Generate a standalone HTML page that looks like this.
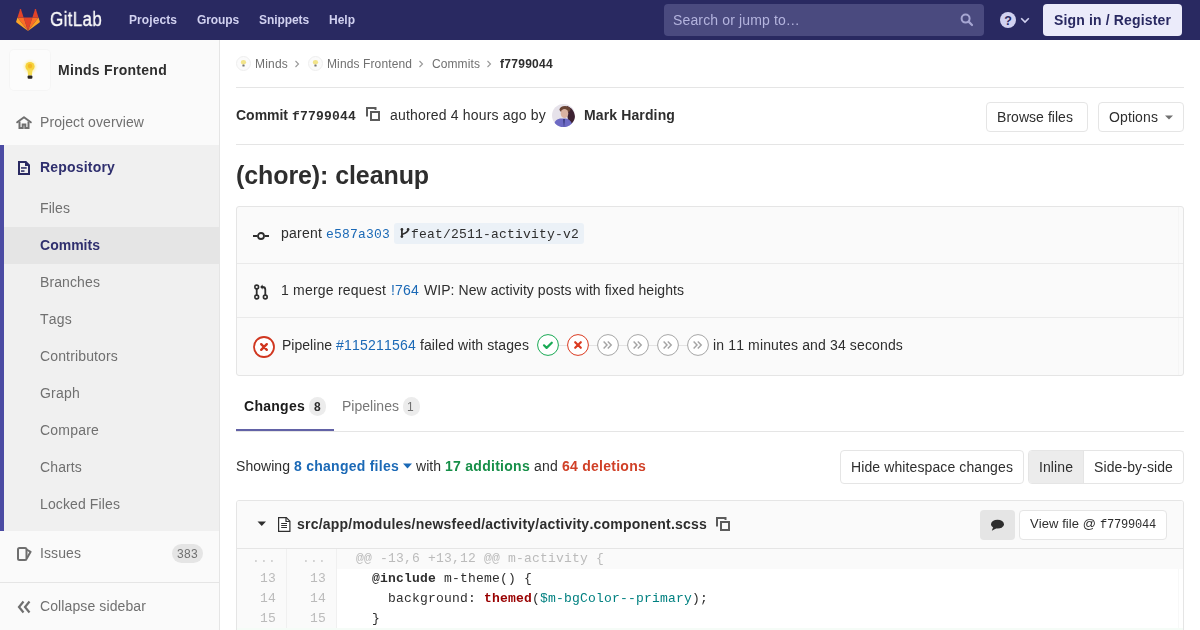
<!DOCTYPE html>
<html><head><meta charset="utf-8">
<style>
*{box-sizing:border-box;margin:0;padding:0}
html,body{width:1200px;height:630px;overflow:hidden;background:#fff;font-family:"Liberation Sans",sans-serif;color:#2e2e2e;font-size:14px}
.a{position:absolute;white-space:pre;line-height:1;font-kerning:none;will-change:transform}
.box{position:absolute}
svg{position:absolute;overflow:visible}
</style></head>
<body>
<div class="box" style="left:0px;top:0px;width:1200px;height:40px;background:#292961;"></div>
<svg style="left:16px;top:8px" width="24" height="23" viewBox="0 0 36 34.6"><path fill="#e24329" d="M18 34.5l6.6-20.3H11.4z"/><path fill="#fc6d26" d="M18 34.5L11.4 14.2H2.2z"/><path fill="#fca326" d="M2.2 14.2L.2 20.4c-.2.6 0 1.2.5 1.5L18 34.5z"/><path fill="#e24329" d="M2.2 14.2h9.2L7.4 2c-.2-.6-1.1-.6-1.3 0z"/><path fill="#fc6d26" d="M18 34.5l6.6-20.3h9.2z"/><path fill="#fca326" d="M33.8 14.2l2 6.2c.2.6 0 1.2-.5 1.5L18 34.5z"/><path fill="#e24329" d="M33.8 14.2h-9.2L28.6 2c.2-.6 1.1-.6 1.3 0z"/></svg>
<div class="a" style="left:50px;top:9px;font-size:20px;color:#fafafa;letter-spacing:0.400px;transform:scaleX(0.85);transform-origin:0 0;-webkit-text-stroke:0.35px #fafafa">GitLab</div>
<div class="a" style="left:129px;top:14px;font-size:12px;color:#d1d1f0;letter-spacing:0.081px;font-weight:bold">Projects</div>
<div class="a" style="left:197px;top:14px;font-size:12px;color:#d1d1f0;letter-spacing:-0.111px;font-weight:bold">Groups</div>
<div class="a" style="left:259px;top:14px;font-size:12px;color:#d1d1f0;letter-spacing:-0.084px;font-weight:bold">Snippets</div>
<div class="a" style="left:329px;top:14px;font-size:12px;color:#d1d1f0;letter-spacing:-0.001px;font-weight:bold">Help</div>
<div class="box" style="left:664px;top:4px;width:320px;height:32px;background:#4a4a7f;border-radius:4px"></div>
<div class="a" style="left:673px;top:13px;font-size:14px;color:#b4b4de;letter-spacing:0.139px">Search or jump to…</div>
<svg style="left:960px;top:13px" width="14" height="14" viewBox="0 0 14 14"><circle cx="5.6" cy="5.6" r="4" fill="none" stroke="#a6a6d2" stroke-width="2"/><path d="M8.6 8.6l3.4 3.4" stroke="#a6a6d2" stroke-width="2.2" stroke-linecap="round"/></svg>
<svg style="left:1000px;top:12px" width="16" height="16" viewBox="0 0 16 16"><circle cx="8" cy="8" r="8" fill="#d1d1f0"/><text x="8" y="12.6" font-family="Liberation Sans" font-weight="bold" font-size="12.5" text-anchor="middle" fill="#292961">?</text></svg>
<svg style="left:1020px;top:17px" width="10" height="7" viewBox="0 0 10 7"><path d="M1.2 1.2l3.8 3.8 3.8-3.8" fill="none" stroke="#d1d1f0" stroke-width="1.6"/></svg>
<div class="box" style="left:1043px;top:4px;width:139px;height:32px;background:#ebebfa;border-radius:4px"></div>
<div class="a" style="left:1054px;top:13px;font-size:14px;color:#292961;letter-spacing:0.147px;font-weight:bold">Sign in / Register</div>
<div class="box" style="left:0px;top:40px;width:220px;height:590px;background:#fafafa;border-right:1px solid #e5e5e5"></div>
<div class="box" style="left:10px;top:50px;width:40px;height:40px;background:#fcfcfc;border-radius:4px;box-shadow:0 0 0 1px rgba(0,0,0,0.02)"></div>
<svg style="left:22px;top:61px" width="16" height="19" viewBox="0 0 16 19"><defs><filter id="gl"><feGaussianBlur stdDeviation="0.9"/></filter><filter id="gl2"><feGaussianBlur stdDeviation="0.5"/></filter></defs><circle cx="8" cy="5.8" r="6.2" fill="#fbf0a8" opacity="0.7" filter="url(#gl)"/><g filter="url(#gl2)"><circle cx="8" cy="5.6" r="4.6" fill="#f7d23a"/><path d="M5.3 8.5 Q6 11 6 14.5 H10 Q10 11 10.7 8.5z" fill="#f5dc52"/><circle cx="8" cy="5" r="2.2" fill="#f2b01e" opacity="0.8"/><rect x="5.6" y="14.6" width="4.8" height="3.2" rx="1" fill="#2a2522"/></g></svg>
<div class="a" style="left:58px;top:63px;font-size:14px;color:#2e2e2e;letter-spacing:0.287px;font-weight:bold">Minds Frontend</div>
<svg style="left:16px;top:116px" width="16" height="13" viewBox="0 0 16 13"><path d="M1.2 6.3L8 1.2l6.8 5.1" fill="none" stroke="#6f6f6f" stroke-width="2" stroke-linejoin="round" stroke-linecap="round"/><path d="M3.5 5.5V12h3.2V8.5h2.6V12h3.2V5.5" fill="none" stroke="#6f6f6f" stroke-width="2"/></svg>
<div class="a" style="left:40px;top:115px;font-size:14px;color:#707070;letter-spacing:0.081px">Project overview</div>
<div class="box" style="left:0px;top:145px;width:219px;height:386px;background:#f0f0f0;"></div>
<div class="box" style="left:0px;top:145px;width:4px;height:386px;background:#4b4ba3;"></div>
<svg style="left:18px;top:161px" width="12" height="14" viewBox="0 0 12 14"><path d="M1 1H7.8L11 4.2V13H1Z" fill="none" stroke="#292961" stroke-width="2" stroke-linejoin="miter"/><path d="M7 0.2L11.8 5H7Z" fill="#292961"/><rect x="3" y="6.2" width="5.7" height="1.5" fill="#292961"/><rect x="3" y="9.3" width="3.5" height="1.5" fill="#292961"/></svg>
<div class="a" style="left:40px;top:160px;font-size:14px;color:#2f2f6e;letter-spacing:0.188px;font-weight:bold">Repository</div>
<div class="box" style="left:4px;top:227px;width:215px;height:37px;background:#e5e5e5;"></div>
<div class="a" style="left:40px;top:201px;font-size:14px;color:#707070;letter-spacing:0.088px">Files</div>
<div class="a" style="left:40px;top:238px;font-size:14px;color:#2f2f6e;letter-spacing:0.015px;font-weight:bold">Commits</div>
<div class="a" style="left:40px;top:275px;font-size:14px;color:#707070;letter-spacing:0.107px">Branches</div>
<div class="a" style="left:40px;top:312px;font-size:14px;color:#707070;letter-spacing:0.219px">Tags</div>
<div class="a" style="left:40px;top:349px;font-size:14px;color:#707070;letter-spacing:0.145px">Contributors</div>
<div class="a" style="left:40px;top:386px;font-size:14px;color:#707070;letter-spacing:0.218px">Graph</div>
<div class="a" style="left:40px;top:423px;font-size:14px;color:#707070;letter-spacing:0.203px">Compare</div>
<div class="a" style="left:40px;top:460px;font-size:14px;color:#707070;letter-spacing:0.128px">Charts</div>
<div class="a" style="left:40px;top:497px;font-size:14px;color:#707070;letter-spacing:0.117px">Locked Files</div>
<svg style="left:17px;top:547px" width="15" height="14" viewBox="0 0 15 14"><rect x="1" y="1" width="8.5" height="12" rx="1.5" fill="none" stroke="#6f6f6f" stroke-width="2"/><path d="M9.5 2.5L13.6 4.8 9.8 11.5" fill="none" stroke="#6f6f6f" stroke-width="2" stroke-linejoin="round"/></svg>
<div class="a" style="left:40px;top:546px;font-size:14px;color:#707070;letter-spacing:0.090px">Issues</div>
<div class="box" style="left:172px;top:544px;width:31px;height:19px;background:#e5e5e5;border-radius:10px"></div>
<div class="a" style="left:177px;top:548px;font-size:12px;color:#707070;letter-spacing:0.326px">383</div>
<div class="box" style="left:0px;top:582px;width:219px;height:1px;background:#e5e5e5;"></div>
<svg style="left:17px;top:600px" width="14" height="14" viewBox="0 0 14 14"><path d="M6.5 1.5L2 7l4.5 5.5M12.5 1.5L8 7l4.5 5.5" fill="none" stroke="#6f6f6f" stroke-width="2.2"/></svg>
<div class="a" style="left:40px;top:599px;font-size:14px;color:#707070;letter-spacing:0.107px">Collapse sidebar</div>
<svg style="left:236px;top:56px" width="15" height="15" viewBox="0 0 15 15"><circle cx="7.5" cy="7.5" r="7" fill="#fbfbfb" stroke="#efefef" stroke-width="1"/><ellipse cx="7.5" cy="6.3" rx="2.6" ry="2.3" fill="#f2e48a"/><rect x="6.4" y="8.6" width="2.2" height="2" rx="0.6" fill="#777"/></svg>
<div class="a" style="left:255px;top:58px;font-size:12px;color:#707070;letter-spacing:0.198px">Minds</div>
<svg style="left:294px;top:60px" width="6" height="8" viewBox="0 0 6 8"><path d="M1.5 1l3 3-3 3" fill="none" stroke="#999" stroke-width="1.1"/></svg>
<svg style="left:308px;top:56px" width="15" height="15" viewBox="0 0 15 15"><circle cx="7.5" cy="7.5" r="7" fill="#fbfbfb" stroke="#efefef" stroke-width="1"/><ellipse cx="7.5" cy="6.3" rx="2.6" ry="2.3" fill="#f2e48a"/><rect x="6.4" y="8.6" width="2.2" height="2" rx="0.6" fill="#777"/></svg>
<div class="a" style="left:327px;top:58px;font-size:12px;color:#707070;letter-spacing:0.116px">Minds Frontend</div>
<svg style="left:418px;top:60px" width="6" height="8" viewBox="0 0 6 8"><path d="M1.5 1l3 3-3 3" fill="none" stroke="#999" stroke-width="1.1"/></svg>
<div class="a" style="left:432px;top:58px;font-size:12px;color:#707070;letter-spacing:0.095px">Commits</div>
<svg style="left:486px;top:60px" width="6" height="8" viewBox="0 0 6 8"><path d="M1.5 1l3 3-3 3" fill="none" stroke="#999" stroke-width="1.1"/></svg>
<div class="a" style="left:500px;top:58px;font-size:12px;color:#2e2e2e;letter-spacing:0.286px;font-weight:bold">f7799044</div>
<div class="box" style="left:236px;top:87px;width:948px;height:1px;background:#e5e5e5;"></div>
<div class="a" style="left:236px;top:108px;font-size:14px;color:#2e2e2e;letter-spacing:-0.018px;font-weight:bold">Commit</div>
<div class="a" style="left:292px;top:110px;font-size:13px;color:#2e2e2e;letter-spacing:0.199px;font-weight:bold;font-family:'Liberation Mono',monospace">f7799044</div>
<svg style="left:366px;top:107px" width="14" height="14" viewBox="0 0 14 14"><path d="M1 9.5V1H9.5V3" fill="none" stroke="#5c5c5c" stroke-width="2"/><rect x="5" y="5" width="8" height="8" fill="none" stroke="#5c5c5c" stroke-width="2"/></svg>
<div class="a" style="left:390px;top:108px;font-size:14px;color:#2e2e2e;letter-spacing:0.184px">authored 4 hours ago by</div>
<svg style="left:552px;top:104px" width="23" height="23" viewBox="0 0 23 23"><defs><clipPath id="av"><circle cx="11.5" cy="11.5" r="11.5"/></clipPath><filter id="bl"><feGaussianBlur stdDeviation="0.7"/></filter></defs><g clip-path="url(#av)"><rect width="23" height="23" fill="#e6e2ea"/><g filter="url(#bl)"><path d="M15 2 C21 4 24 10 23 18 L17 22 L15 10Z" fill="#3c2030"/><ellipse cx="13" cy="5.5" rx="5.5" ry="3.5" fill="#6a4436"/><ellipse cx="12.5" cy="9.5" rx="3.8" ry="4.6" fill="#d9b2a2"/><path d="M1 24 C2 16 6 14 11 14.5 C16 14 20 16 21 24Z" fill="#6d6ac4"/><path d="M11 15 L12 24 L13 15Z" fill="#3a3a80"/></g></g></svg>
<div class="a" style="left:584px;top:108px;font-size:14px;color:#2e2e2e;letter-spacing:0.128px;font-weight:bold">Mark Harding</div>
<div class="box" style="left:986px;top:102px;width:102px;height:30px;background:#fff;border:1px solid #e5e5e5;border-radius:4px"></div>
<div class="a" style="left:997px;top:110px;font-size:14px;color:#2e2e2e;letter-spacing:0.044px">Browse files</div>
<div class="box" style="left:1098px;top:102px;width:86px;height:30px;background:#fff;border:1px solid #e5e5e5;border-radius:4px"></div>
<div class="a" style="left:1109px;top:110px;font-size:14px;color:#2e2e2e;letter-spacing:0.107px">Options</div>
<svg style="left:1165px;top:115px" width="8" height="5" viewBox="0 0 8 5"><path d="M0 0.5h8L4 4.5z" fill="#707070"/></svg>
<div class="box" style="left:236px;top:144px;width:948px;height:1px;background:#e5e5e5;"></div>
<div class="a" style="left:236px;top:163px;font-size:25px;color:#2e2e2e;letter-spacing:-0.092px;font-weight:bold">(chore): cleanup</div>
<div class="box" style="left:236px;top:206px;width:948px;height:170px;background:#fafafa;border:1px solid #e5e5e5;border-radius:3px"></div>
<div class="box" style="left:1178px;top:207px;width:1px;height:168px;background:#f5f5f5;"></div>
<div class="box" style="left:237px;top:263px;width:946px;height:1px;background:#eaeaea;"></div>
<div class="box" style="left:237px;top:317px;width:946px;height:1px;background:#eaeaea;"></div>
<svg style="left:253px;top:231px" width="16" height="10" viewBox="0 0 16 10"><path d="M0 5H4.5M11.5 5H16" stroke="#2e2e2e" stroke-width="2"/><circle cx="8" cy="5" r="3" fill="none" stroke="#2e2e2e" stroke-width="1.8"/></svg>
<div class="a" style="left:281px;top:226px;font-size:14px;color:#2e2e2e;letter-spacing:0.217px">parent</div>
<div class="a" style="left:326px;top:228px;font-size:13px;color:#1b69b6;letter-spacing:0.199px;font-family:'Liberation Mono',monospace">e587a303</div>
<div class="box" style="left:394px;top:223px;width:190px;height:21px;background:#ebf1f7;border-radius:3px"></div>
<svg style="left:400px;top:228px" width="10" height="10" viewBox="0 0 10 10"><path d="M1.9 1.3V8.7" stroke="#2e2e2e" stroke-width="1.7"/><circle cx="1.9" cy="1.4" r="1.35" fill="#2e2e2e"/><circle cx="1.9" cy="8.6" r="1.35" fill="#2e2e2e"/><circle cx="8.1" cy="1.4" r="1.35" fill="#2e2e2e"/><path d="M8.1 1.4C8.1 4.6 5.2 5.2 1.9 6.4" fill="none" stroke="#2e2e2e" stroke-width="1.7"/></svg>
<div class="a" style="left:411px;top:228px;font-size:13px;color:#2e2e2e;letter-spacing:0.199px;font-family:'Liberation Mono',monospace">feat/2511-activity-v2</div>
<svg style="left:254px;top:284px" width="14" height="16" viewBox="0 0 14 16"><circle cx="2.7" cy="3" r="1.9" fill="none" stroke="#2e2e2e" stroke-width="1.6"/><circle cx="2.7" cy="13" r="1.9" fill="none" stroke="#2e2e2e" stroke-width="1.6"/><circle cx="11.3" cy="13" r="1.9" fill="none" stroke="#2e2e2e" stroke-width="1.6"/><path d="M2.7 5V11" stroke="#2e2e2e" stroke-width="1.8"/><path d="M11.3 11V5.5Q11.3 3 8.5 3H7" fill="none" stroke="#2e2e2e" stroke-width="1.8"/><path d="M8.6 0.6L6.2 3 8.6 5.4z" fill="#2e2e2e"/></svg>
<div class="a" style="left:281px;top:283px;font-size:14px;color:#2e2e2e;letter-spacing:0.204px">1 merge request</div>
<div class="a" style="left:391px;top:283px;font-size:14px;color:#1b69b6;letter-spacing:0.188px">!764</div>
<div class="a" style="left:424px;top:283px;font-size:14px;color:#2e2e2e;letter-spacing:0.059px">WIP: New activity posts with fixed heights</div>
<svg style="left:253px;top:336px" width="22" height="22" viewBox="0 0 22 22"><circle cx="11" cy="11" r="10" fill="#fff" stroke="#d0361f" stroke-width="1.8"/><path d="M8.2 8.2l5.6 5.6M13.8 8.2l-5.6 5.6" stroke="#d0361f" stroke-width="2.4" stroke-linecap="round"/></svg>
<div class="a" style="left:282px;top:338px;font-size:14px;color:#2e2e2e;letter-spacing:0.023px">Pipeline</div>
<div class="a" style="left:336px;top:338px;font-size:14px;color:#1b69b6;letter-spacing:0.214px">#115211564</div>
<div class="a" style="left:420px;top:338px;font-size:14px;color:#2e2e2e;letter-spacing:0.089px">failed with stages</div>
<div class="box" style="left:548px;top:345px;width:150px;height:1px;background:#e3e3e3;"></div>
<svg style="left:537px;top:334px" width="22" height="22" viewBox="0 0 22 22"><circle cx="11" cy="11" r="10.4" fill="#fff" stroke="#1aaa55" stroke-width="1"/><path d="M7 11.3l2.6 2.6 5.2-5.2" fill="none" stroke="#1aaa55" stroke-width="2.2" stroke-linecap="round" stroke-linejoin="round"/></svg>
<svg style="left:567px;top:334px" width="22" height="22" viewBox="0 0 22 22"><circle cx="11" cy="11" r="10.4" fill="#fff" stroke="#db3b21" stroke-width="1"/><path d="M8.2 8.2l5.6 5.6M13.8 8.2l-5.6 5.6" stroke="#db3b21" stroke-width="2.2" stroke-linecap="round"/></svg>
<svg style="left:597px;top:334px" width="22" height="22" viewBox="0 0 22 22"><circle cx="11" cy="11" r="10.4" fill="#fff" stroke="#a7a7a7" stroke-width="1"/><path d="M6.6 7.6l3.4 3.4-3.4 3.4M10.8 7.6l3.4 3.4-3.4 3.4" fill="none" stroke="#a4a4a4" stroke-width="1.45"/></svg>
<svg style="left:627px;top:334px" width="22" height="22" viewBox="0 0 22 22"><circle cx="11" cy="11" r="10.4" fill="#fff" stroke="#a7a7a7" stroke-width="1"/><path d="M6.6 7.6l3.4 3.4-3.4 3.4M10.8 7.6l3.4 3.4-3.4 3.4" fill="none" stroke="#a4a4a4" stroke-width="1.45"/></svg>
<svg style="left:657px;top:334px" width="22" height="22" viewBox="0 0 22 22"><circle cx="11" cy="11" r="10.4" fill="#fff" stroke="#a7a7a7" stroke-width="1"/><path d="M6.6 7.6l3.4 3.4-3.4 3.4M10.8 7.6l3.4 3.4-3.4 3.4" fill="none" stroke="#a4a4a4" stroke-width="1.45"/></svg>
<svg style="left:687px;top:334px" width="22" height="22" viewBox="0 0 22 22"><circle cx="11" cy="11" r="10.4" fill="#fff" stroke="#a7a7a7" stroke-width="1"/><path d="M6.6 7.6l3.4 3.4-3.4 3.4M10.8 7.6l3.4 3.4-3.4 3.4" fill="none" stroke="#a4a4a4" stroke-width="1.45"/></svg>
<div class="a" style="left:713px;top:338px;font-size:14px;color:#2e2e2e;letter-spacing:0.142px">in 11 minutes and 34 seconds</div>
<div class="a" style="left:244px;top:399px;font-size:14px;color:#1a1a1a;letter-spacing:0.268px;font-weight:bold">Changes</div>
<div class="box" style="left:309px;top:397px;width:17px;height:19px;background:#ececec;border-radius:9px"></div>
<div class="a" style="left:314px;top:401px;font-size:12px;color:#2e2e2e;letter-spacing:0.326px;font-weight:bold">8</div>
<div class="a" style="left:342px;top:399px;font-size:14px;color:#777;letter-spacing:0.021px">Pipelines</div>
<div class="box" style="left:403px;top:397px;width:17px;height:19px;background:#ececec;border-radius:9px"></div>
<div class="a" style="left:407px;top:401px;font-size:12px;color:#707070;letter-spacing:0.326px">1</div>
<div class="box" style="left:236px;top:431px;width:948px;height:1px;background:#e5e5e5;"></div>
<div class="box" style="left:236px;top:429px;width:98px;height:2px;background:#6262a6;"></div>
<div class="a" style="left:236px;top:459px;font-size:14px;color:#2e2e2e;letter-spacing:0.042px">Showing</div>
<div class="a" style="left:294px;top:459px;font-size:14px;color:#1b69b6;letter-spacing:0.257px;font-weight:bold">8 changed files</div>
<svg style="left:403px;top:463px" width="9" height="6" viewBox="0 0 9 6"><path d="M0 0.5h9L4.5 5.5z" fill="#1b69b6"/></svg>
<div class="a" style="left:416px;top:459px;font-size:14px;color:#2e2e2e;letter-spacing:0.026px">with</div>
<div class="a" style="left:445px;top:459px;font-size:14px;color:#168f48;letter-spacing:0.276px;font-weight:bold">17 additions</div>
<div class="a" style="left:534px;top:459px;font-size:14px;color:#2e2e2e;letter-spacing:0.214px">and</div>
<div class="a" style="left:562px;top:459px;font-size:14px;color:#d04027;letter-spacing:0.257px;font-weight:bold">64 deletions</div>
<div class="box" style="left:840px;top:450px;width:184px;height:34px;background:#fff;border:1px solid #e5e5e5;border-radius:4px"></div>
<div class="a" style="left:851px;top:460px;font-size:14px;color:#2e2e2e;letter-spacing:0.107px">Hide whitespace changes</div>
<div class="box" style="left:1028px;top:450px;width:156px;height:34px;background:#fff;border:1px solid #e5e5e5;border-radius:4px"></div>
<div class="box" style="left:1029px;top:451px;width:55px;height:32px;background:#ececec;border-right:1px solid #e5e5e5;border-radius:3px 0 0 3px"></div>
<div class="a" style="left:1039px;top:460px;font-size:14px;color:#2e2e2e;letter-spacing:0.089px">Inline</div>
<div class="a" style="left:1094px;top:460px;font-size:14px;color:#2e2e2e;letter-spacing:0.099px">Side-by-side</div>
<div class="box" style="left:236px;top:500px;width:948px;height:140px;background:#fff;border:1px solid #e5e5e5;border-radius:3px 3px 0 0"></div>
<div class="box" style="left:237px;top:501px;width:946px;height:48px;background:#fafafa;border-bottom:1px solid #e5e5e5;border-radius:2px 2px 0 0"></div>
<div class="box" style="left:1178px;top:549px;width:1px;height:81px;background:#f8f8f8;"></div>
<svg style="left:257px;top:521px" width="10" height="6" viewBox="0 0 10 6"><path d="M0.5 0.5h8.5L4.75 5z" fill="#2e2e2e"/></svg>
<svg style="left:278px;top:517px" width="13" height="15" viewBox="0 0 13 15"><path d="M0.6 0.6H8.3L11.9 4.2V14.4H0.6Z" fill="#fff" stroke="#2e2e2e" stroke-width="1.2" stroke-linejoin="miter"/><path d="M8 0.6V4.5H11.9" fill="none" stroke="#2e2e2e" stroke-width="1.2"/><path d="M3.2 6.5H9M3.2 8.5H9M3.2 10.5H9" stroke="#2e2e2e" stroke-width="1"/></svg>
<div class="a" style="left:297px;top:517px;font-size:14px;color:#2e2e2e;letter-spacing:0.218px;font-weight:bold">src/app/modules/newsfeed/activity/activity.component.scss</div>
<svg style="left:716px;top:517px" width="14" height="14" viewBox="0 0 14 14"><path d="M1 9.5V1H9.5V3" fill="none" stroke="#5c5c5c" stroke-width="2"/><rect x="5" y="5" width="8" height="8" fill="none" stroke="#5c5c5c" stroke-width="2"/></svg>
<div class="box" style="left:980px;top:510px;width:35px;height:30px;background:#e5e5e5;border-radius:4px"></div>
<svg style="left:990px;top:519px" width="15" height="13" viewBox="0 0 15 13"><ellipse cx="7.5" cy="5.2" rx="6.5" ry="4.4" fill="#2e2e2e"/><path d="M3.2 8L1.8 11.8 6.5 9.2z" fill="#2e2e2e"/></svg>
<div class="box" style="left:1019px;top:510px;width:148px;height:30px;background:#fff;border:1px solid #e5e5e5;border-radius:4px"></div>
<div class="a" style="left:1030px;top:517px;font-size:13px;color:#2e2e2e;letter-spacing:0.071px">View file @</div>
<div class="a" style="left:1100px;top:519px;font-size:12px;color:#2e2e2e;letter-spacing:-0.201px;font-family:'Liberation Mono',monospace">f7799044</div>
<div class="box" style="left:237px;top:549px;width:50px;height:81px;background:#fafafa;border-right:1px solid #f0f0f0"></div>
<div class="box" style="left:287px;top:549px;width:50px;height:81px;background:#fafafa;border-right:1px solid #f0f0f0"></div>
<div class="box" style="left:337px;top:549px;width:846px;height:20px;background:#fafafa;"></div>
<div class="box" style="left:237px;top:628px;width:946px;height:2px;background:#f5fcf7;"></div>
<div class="a" style="left:252px;top:552px;font-size:13px;color:#ccc;letter-spacing:0.199px;font-family:'Liberation Mono',monospace">...</div>
<div class="a" style="left:302px;top:552px;font-size:13px;color:#ccc;letter-spacing:0.199px;font-family:'Liberation Mono',monospace">...</div>
<div class="a" style="left:260px;top:572px;font-size:13px;color:#bbb;letter-spacing:0.199px;font-family:'Liberation Mono',monospace">13</div>
<div class="a" style="left:310px;top:572px;font-size:13px;color:#bbb;letter-spacing:0.199px;font-family:'Liberation Mono',monospace">13</div>
<div class="a" style="left:260px;top:592px;font-size:13px;color:#bbb;letter-spacing:0.199px;font-family:'Liberation Mono',monospace">14</div>
<div class="a" style="left:310px;top:592px;font-size:13px;color:#bbb;letter-spacing:0.199px;font-family:'Liberation Mono',monospace">14</div>
<div class="a" style="left:260px;top:612px;font-size:13px;color:#bbb;letter-spacing:0.199px;font-family:'Liberation Mono',monospace">15</div>
<div class="a" style="left:310px;top:612px;font-size:13px;color:#bbb;letter-spacing:0.199px;font-family:'Liberation Mono',monospace">15</div>
<div class="a" style="left:356px;top:552px;font-size:13px;color:#bbb;letter-spacing:0.199px;font-family:'Liberation Mono',monospace">@@ -13,6 +13,12 @@ m-activity {</div>
<div class="a" style="left:356px;top:572px;font-size:13px;letter-spacing:0.2px;font-family:'Liberation Mono',monospace;color:#2e2e2e">  <b>@include</b> m-theme() {</div>
<div class="a" style="left:356px;top:592px;font-size:13px;letter-spacing:0.2px;font-family:'Liberation Mono',monospace;color:#2e2e2e">    background: <b style="color:#990000">themed</b>(<span style="color:#008080">$m-bgColor--primary</span>);</div>
<div class="a" style="left:356px;top:612px;font-size:13px;letter-spacing:0.2px;font-family:'Liberation Mono',monospace;color:#2e2e2e">  }</div>
</body></html>
